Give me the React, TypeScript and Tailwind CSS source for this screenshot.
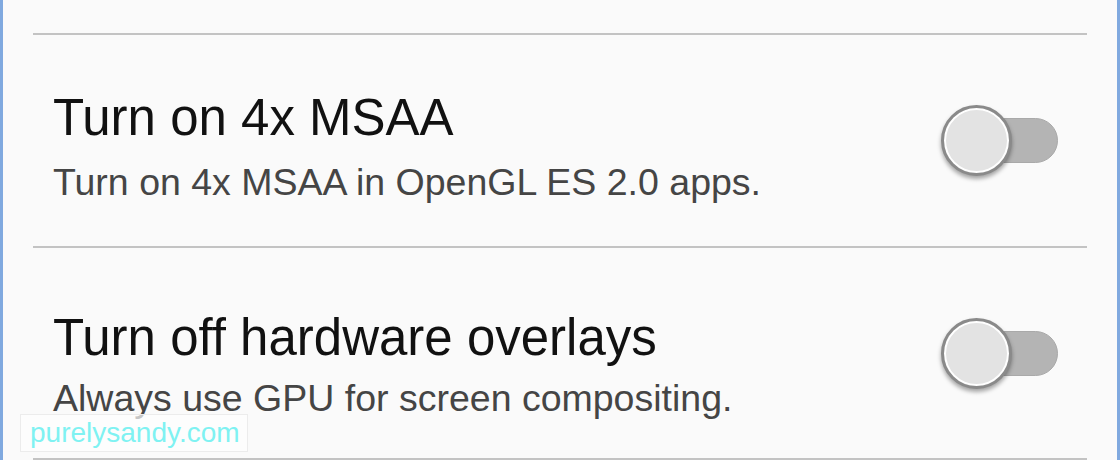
import React from "react";

interface SettingRowProps {
  title: string;
  description: string;
  rowClass: string;
  toggleClass: string;
  gapClass: string;
}

function Toggle({ className }: { className: string }) {
  return (
    <div className={`flex items-center shrink-0 ${className}`}>
      <div className="relative z-10 w-[71px] h-[71px] rounded-full bg-[#e3e3e3] border-[3px] border-[#8a8a8a] shadow-[inset_0_0_0_2px_#ffffff,0_3px_4px_rgba(0,0,0,0.35)]" />
      <div className="-ml-[9px] w-[55px] h-[45px] rounded-r-full bg-[#b4b4b4] border border-[#a9a9a9]" />
    </div>
  );
}

function SettingRow({ title, description, rowClass, toggleClass, gapClass }: SettingRowProps) {
  return (
    <div className={`flex flex-row items-start justify-between pl-[20px] pr-[29px] ${rowClass}`}>
      <div className={`flex flex-col ${gapClass}`}>
        <span className="text-[51px] leading-[52px] text-[#111111]">{title}</span>
        <span className="text-[37.5px] leading-[38px] text-[#454545]">{description}</span>
      </div>
      <Toggle className={toggleClass} />
    </div>
  );
}

export default function App() {
  return (
    <div
      className="relative w-[1120px] h-[460px] overflow-hidden bg-[#fafafa] border-x-[3px] border-[#80a9df]"
      style={{ fontFamily: '"Liberation Sans", Arial, sans-serif' }}
    >
      <div className="flex flex-col px-[30px] pt-[33px]">
        <div className="h-[2px] bg-[#c3c3c3]" />
        <SettingRow
          title="Turn on 4x MSAA"
          description="Turn on 4x MSAA in OpenGL ES 2.0 apps."
          rowClass="pt-[57px] h-[211px]"
          toggleClass="mt-[13px]"
          gapClass="gap-[19px]"
        />
        <div className="h-[2px] bg-[#c3c3c3]" />
        <SettingRow
          title="Turn off hardware overlays"
          description="Always use GPU for screen compositing."
          rowClass="pt-[64px] h-[210px]"
          toggleClass="mt-[6px]"
          gapClass="gap-[15px]"
        />
        <div className="h-[2px] bg-[#c3c3c3]" />
      </div>

      <div className="absolute left-[17px] top-[414px] w-[228px] h-[38px] flex items-center pl-[9px] bg-[#fdfdfd]/70 border border-[#ececec]">
        <span className="text-[28px] leading-none text-[#7ff2f2]">purelysandy.com</span>
      </div>
    </div>
  );
}
